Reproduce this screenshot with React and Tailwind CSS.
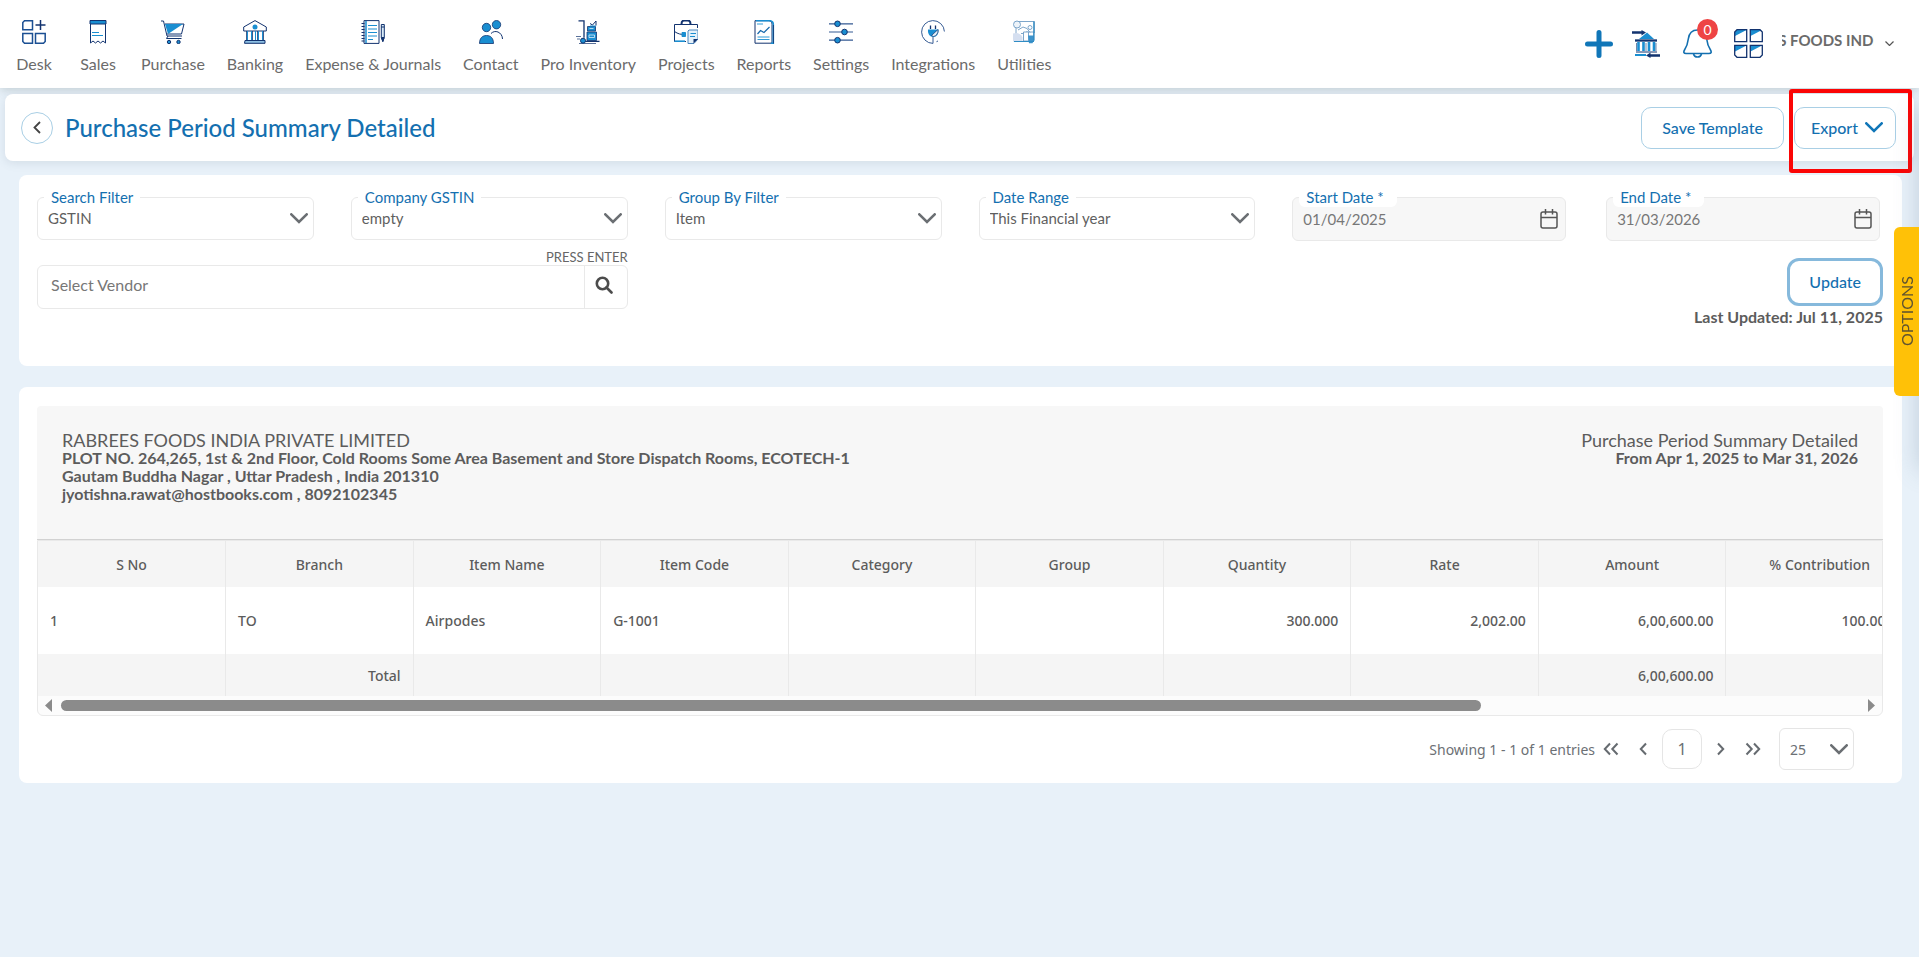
import React from "react";

const NAVY = "#12336f";
const BLUE = "#1a8ed1";

function Icon({ children, className = "size-6" }) {
  return (
    <svg viewBox="0 0 24 24" className={className} fill="none" stroke={NAVY} strokeWidth="1" aria-hidden="true">
      {children}
    </svg>
  );
}

const icons = {
  Desk: (
    <g stroke="#1b4f93" strokeWidth="1.5">
      <path d="M2.500.8h8v9H.8V2.500zM.8 13.500h9.700v9.700H2.500l-1.700-1.700zM13.500 13.500h9.700v8l-1.700 1.700h-8z" />
      <path d="M18.500 0v10M13.500 5h10" stroke={NAVY} />
    </g>
  ),
  Sales: (
    <g>
      <path d="M4.500.5h15v22.500l-2.500-2-2.500 2-2.500-2-2.500 2-2.500-2-2.500 2z" />
      <path d="M4 .5h16v3.500H4z" fill={BLUE} />
      <path d="M6 12.500h7M6 15.500h11" stroke={BLUE} />
    </g>
  ),
  Purchase: (
    <g>
      <path d="M0 1h2.500L6 16h15M4 4h19l-2.500 10H6M7 16l-1.500 2.500h15" />
      <path d="M4 4h18L7 14z" fill={BLUE} stroke="none" />
      <circle cx="8" cy="22" r="1.700" fill={BLUE} />
      <circle cx="17.500" cy="22" r="1.700" fill={BLUE} />
    </g>
  ),
  Banking: (
    <g>
      <path d="M12 .6 23.300 7v4H.7V7z" />
      <circle cx="12" cy="7" r="2.500" fill={BLUE} stroke="none" />
      <path d="M4.500 11v9M8.500 11v9M12.500 11v9M15.500 11v9M19.500 11v9" stroke={BLUE} />
      <path d="M3.500 11v9M9.500 11v9M14.500 11v9M20.500 11v9" strokeWidth=".8" />
      <path d="M2 20.500h20v2.800H1.500z" fill="#8dbfe3" />
    </g>
  ),
  "Expense & Journals": (
    <g>
      <path d="M3 .6h15v22.800H3z" />
      <path d="M.5 3.500h3M.5 6.500h3M.5 9.500h3M.5 12.500h3M.5 15.500h3M.5 18.500h3M.5 21h3" />
      <path d="M5 1v22" stroke={BLUE} strokeWidth="1.500" />
      <path d="M7 5.500h9M7 9h9M7 12.500h9M7 16h9M7 19.500h5" stroke={BLUE} strokeWidth="1.200" />
      <path d="M20.300 4.500h3v13l-1.500 4-1.500-4zM20.300 7h3" fill="#d9ebf7" />
      <path d="M20.500 17.500h2.600l-1.300 4z" fill={NAVY} />
    </g>
  ),
  Contact: (
    <g>
      <circle cx="7.500" cy="7.500" r="4.200" fill={BLUE} strokeWidth=".8" />
      <circle cx="17.500" cy="4.700" r="4.200" fill={BLUE} strokeWidth=".8" />
      <path d="M.5 23.500c0-5 2.500-8 7-8s7 3 7 8z" fill={BLUE} strokeWidth=".8" />
      <path d="M12 13.500c2-2 4.500-2.500 7-1.500s4.500 3.800 4.500 7" />
    </g>
  ),
  "Pro Inventory": (
    <g>
      <path d="M2.500.8h5.500v17M9 21.300h14.500" strokeWidth="1.300" />
      <path d="M0 16.500h5M1 19h3M3 23.500h17" strokeWidth=".7" />
      <path d="M11.500 6.500h8v4.500h-8zM11 12h9.500v8.500H11z" fill={BLUE} strokeWidth=".8" />
      <path d="M13.500 8.500h4M13 15h5.500v2.500H13z" stroke="#d9ebf7" strokeWidth=".8" />
      <path d="m14 3.500 2.500 1.500L20 1v4.500" strokeWidth="1" />
      <path d="M14 6h6" stroke={BLUE} />
      <circle cx="7" cy="20.700" r="2.500" fill={BLUE} />
    </g>
  ),
  Projects: (
    <g>
      <path d="M23.500 8V4.500H.5v17H12M.5 11.500C4 14 7 14.500 10 14.500" />
      <path d="M7.500 4c0-2.500 1-3.400 2.500-3.400h4c1.500 0 2.500.9 2.500 3.400" strokeWidth="2" />
      <path d="M8 12.500h3.500v4H8z" fill={BLUE} stroke={BLUE} />
      <path d="M.5 21.200H11" stroke={BLUE} strokeWidth="1.600" />
      <path d="M15 10h9v9l-4 4.500h-6V11z" fill="#e4f1fa" stroke="#4a86bd" />
      <path d="M16.500 13.500H22M16 16.500h5" stroke={BLUE} />
      <path d="M19.500 23.500V19H24z" fill={NAVY} stroke="none" />
    </g>
  ),
  Reports: (
    <g>
      <path d="M3 .7h13.500c2.500 0 3.500 1.500 3.500 3.500v19H3z" />
      <path d="M4 .8h14.500c1.500.5 2.800 2 2.800 3.500v19h-2.500" stroke={BLUE} strokeWidth="1.600" />
      <path d="M21.500 5v18.500" strokeWidth=".8" />
      <path d="m5.500 14 3-3.500 3.500 2 5.500-5.500" stroke="#1769ad" strokeWidth="1.200" />
      <path d="M5 4h6M5.500 17h12M5.500 19.500h12" stroke={BLUE} strokeWidth=".9" />
    </g>
  ),
  Settings: (
    <g>
      <path d="M0 3.800h24M0 12h24M0 20.200h24" stroke="#345a93" strokeWidth="1.200" />
      <circle cx="8.500" cy="3.800" r="2.800" fill={BLUE} />
      <circle cx="15.500" cy="12" r="2.800" fill={BLUE} />
      <circle cx="8.500" cy="20.200" r="2.800" fill={BLUE} />
    </g>
  ),
  Integrations: (
    <g>
      <path d="M17 21c-.500.300-1 .5-1.500.7M12 23.400A11.400 11.400 0 1 1 23.400 11.500M12 23.400V17" stroke="#345a93" />
      <path d="M9.500 9V5.500M14.500 9V5.500" strokeWidth="1.300" />
      <path d="M7 9.500h10.500c.5 4.500-2 7.500-5.300 7.500S6.500 14 7 9.500z" fill={BLUE} stroke="none" />
      <path d="m10.500 15.500 6.500-6c.4 4-1.800 6.500-4.500 7z" fill="#e4f1fa" strokeWidth=".7" />
    </g>
  ),
  Utilities: (
    <g stroke="#6f9cc4" strokeWidth=".9">
      <path d="M3 1.500h19.500V13M4 14V8M9 13.500h4M14 12h8v8" />
      <circle cx="5" cy="4.500" r="3.500" fill="#edf3f9" />
      <circle cx="18" cy="7.500" r="2" />
      <path d="m6 10 5-3 4 1.500 3 4" />
      <path d="M1 13.500c4-1.500 8 0 9.500 4v4H1z" fill="#d5dff0" stroke="none" />
      <path d="M11.500 12h5v9h-5z" fill="#fff" />
      <path d="M16 15.500h6V20l-1.500 3.300H17z" fill="#3e93cb" stroke="none" />
      <path d="M2 21.500h20M21.800 1.500V21" stroke="#2f8cc4" strokeWidth="1.200" />
    </g>
  ),
};

const nav = Object.keys(icons);

function Chevron({ className = "text-[#6b6f73]" }) {
  return (
    <svg viewBox="0 0 18 11" className={`h-[11px] w-[18px] ${className}`} fill="none" stroke="currentColor" strokeWidth="2.600" aria-hidden="true">
      <path d="m1.300 1.300 7.700 7.700 7.700-7.700" strokeLinecap="round" />
    </svg>
  );
}

function Pager({ label, double, right }) {
  return (
    <button type="button" aria-label={label} className="text-[#666b70]">
      <svg viewBox={double ? "0 0 16 14" : "0 0 8 14"} className={double ? "h-[14px] w-4" : "h-[14px] w-2"} fill="none" stroke="currentColor" strokeWidth="2">
        <g transform={right ? (double ? "matrix(-1 0 0 1 16 0)" : "matrix(-1 0 0 1 8 0)") : undefined}>
          <path d="M7 1.500 1.800 7 7 12.500" />
          {double && <path d="M14.500 1.500 9.300 7l5.200 5.500" />}
        </g>
      </svg>
    </button>
  );
}

function FieldLabel({ id, children }) {
  return (
    <label htmlFor={id} className="absolute -top-[10px] left-[7px] rounded-md bg-white px-[7px] text-[15px] leading-5 text-[#1470b0]">
      {children}
    </label>
  );
}

function SelectField({ id, label, value }) {
  return (
    <div className="relative">
      <FieldLabel id={id}>{label}</FieldLabel>
      <select id={id} className="h-[43px] w-full appearance-none rounded-md border border-[#e9e9e9] bg-white pl-[10px] text-[15px] text-[#5f5f5f]">
        <option>{value}</option>
      </select>
      <span className="pointer-events-none absolute right-[6px] top-4">
        <Chevron />
      </span>
    </div>
  );
}

function DateField({ id, label, value }) {
  return (
    <div className="relative mr-[3px]">
      <FieldLabel id={id}>
        {label} <span className="pr-[6px]">*</span>
      </FieldLabel>
      <input id={id} disabled defaultValue={value} className="h-11 w-full rounded-md border border-[#e9e9e9] bg-[#f7f7f7] pl-[10px] pr-10 text-[15px] text-[#777]" />
      <svg viewBox="0 0 18 20" className="absolute right-2 top-[12px] h-5 w-[18px]" fill="none" stroke="#555" strokeWidth="1.500" aria-hidden="true">
        <rect x="1" y="3" width="16" height="16" rx="2" />
        <path d="M1 8.500h16M5.500 0v5.500M12.500 0v5.500" />
      </svg>
    </div>
  );
}

const columns = ["S No", "Branch", "Item Name", "Item Code", "Category", "Group", "Quantity", "Rate", "Amount", "% Contribution"];
const row = ["1", "TO", "Airpodes", "G-1001", "", "", "300.000", "2,002.00", "6,00,600.00", "100.00 %"];
const totals = ["", "Total", "", "", "", "", "", "", "6,00,600.00", ""];

export default function App() {
  return (
    <div className="relative min-h-screen overflow-x-hidden bg-[#e8f1f9] font-['Lato',sans-serif] text-[#5c5c5c]">
      <header className="relative flex h-[88px] items-start bg-white pl-[13px] pr-[25px] shadow-[0_2px_8px_rgba(90,110,110,0.25)]">
        <nav className="flex gap-[22px] pt-5">
          {nav.map((name) => (
            <a key={name} href="#" className="flex min-w-[42px] flex-col items-center gap-[10px] whitespace-nowrap text-[16px] leading-5 text-[#6b6b6b]">
              <Icon>{icons[name]}</Icon>
              {name}
            </a>
          ))}
        </nav>
        <div className="ml-auto flex items-center pt-[29px]">
          <button type="button" aria-label="Add" className="mr-[19px]">
            <svg viewBox="0 0 28 28" className="size-7" stroke="#1076b8" strokeWidth="5" strokeLinecap="round">
              <path d="M14 2.500v23M2.500 14h23" />
            </svg>
          </button>
          <button type="button" aria-label="Bank transfer" className="mr-[23px]">
            <svg viewBox="0 0 28 28" className="size-7" fill="none" stroke={NAVY}>
              <path d="M0 2.500h10M18 25.500h10" strokeWidth="2.500" />
              <path d="M9.500 0 14 2.500 9.500 5.500zM18.500 22.500 14 25.500l4.500 2.500z" fill={NAVY} stroke="none" />
              <path d="M15 2.500 22 9H7z" fill={BLUE} stroke="none" />
              <path d="M3 10.500h22" strokeWidth="2.300" />
              <path d="M6.500 12v9M11.500 12v9M17 12v9M22 12v9" stroke={BLUE} strokeWidth="2.600" />
              <path d="M4.500 13v8M14 13v8M24 13v8" strokeWidth=".6" />
              <path d="M4 22h21" strokeWidth="1" />
              <path d="M3 25h11" stroke={BLUE} strokeWidth="2" />
            </svg>
          </button>
          <button type="button" aria-label="Notifications" className="relative mr-[22px]">
            <svg viewBox="0 0 29 29" className="size-[29px]" fill="none" stroke="#1470b0" strokeWidth="1.600">
              <path d="M14.500 1C9 1 6 4.500 5.300 10 4.800 14.500 3.800 17.500 1.500 21c-1.300 2.300-.7 3.500 1.500 3.500h23c2.200 0 2.800-1.200 1.500-3.500-2.300-3.500-3.300-6.500-3.800-11C23 4.500 20 1 14.500 1z" />
              <path d="M10.500 25c.5 2 2 3 4 3s3.500-1 4-3" />
            </svg>
            <span className="absolute -top-[10px] left-[14px] flex size-[21px] items-center justify-center rounded-full bg-[#ee4444] text-[14px] text-white">0</span>
          </button>
          <button type="button" aria-label="Apps" className="mr-[19px]">
            <svg viewBox="0 0 29 29" className="size-[29px]" fill="none" stroke={NAVY} strokeWidth="1.300">
              <path d="M1 7V3l2-2h9.500zM16.500 7V1H28zM1 22.500v-6h11.500zM16.500 22.500v-6H28z" fill={BLUE} stroke="none" />
              <path d="M3 .7h9.700v12H.7V3zM16.300.7H26L28.300 3v9.700h-12zM.7 16.300h12v12H3L.7 26zM16.300 16.300h12V26L26 28.300h-9.700z" />
            </svg>
          </button>
          <button type="button" className="flex items-center gap-[11px] pb-[7px]">
            <span className="flex w-[92px] justify-center overflow-hidden whitespace-nowrap text-[15px] font-bold leading-5 text-[#6b6b6b]">S FOODS INDI</span>
            <svg viewBox="0 0 9 5" className="mt-[6px] h-[5px] w-[9px]" fill="none" stroke="#555" strokeWidth="1.200">
              <path d="m.5.5 4 4 4-4" />
            </svg>
          </button>
        </div>
      </header>

      <div className="relative mx-[5px] mt-[6px] flex h-[67px] items-center rounded-lg bg-white pl-4 pr-[18px] shadow-[0_2px_10px_rgba(90,110,130,0.15)]">
        <button type="button" aria-label="Back" className="flex size-8 items-center justify-center rounded-full border border-[#a9cfe5]">
          <svg viewBox="0 0 8 13" className="h-[13px] w-2" fill="none" stroke="#444" strokeWidth="1.800">
            <path d="M7 1 1.500 6.500 7 12" />
          </svg>
        </button>
        <h1 className="ml-3 text-[24px] font-medium leading-8 text-[#1470b0]">Purchase Period Summary Detailed</h1>
        <div className="ml-auto flex items-center gap-[10px] text-[16px] font-medium text-[#1470b0]">
          <button type="button" className="h-[42px] rounded-[10px] border border-[#a9cfe5] px-5">Save Template</button>
          <div className="relative">
            <button type="button" className="flex h-[42px] items-center gap-[7px] rounded-[10px] border border-[#a9cfe5] pl-4 pr-3">
              Export
              <Chevron className="text-[#1076b8]" />
            </button>
            <div className="pointer-events-none absolute -left-[5px] -right-4 -top-[18px] h-[84px] rounded-[3px] border-4 border-[#fb0505]" />
          </div>
        </div>
      </div>

      <main className="ml-[19px] mr-[17px] mt-[14px]">
        <section className="grid grid-cols-6 gap-x-[37px] rounded-lg bg-white pb-10 pl-[18px] pr-[19px] pt-[22px]">
          <SelectField id="search-filter" label="Search Filter" value="GSTIN" />
          <SelectField id="company" label="Company GSTIN" value="empty" />
          <SelectField id="group-by" label="Group By Filter" value="Item" />
          <SelectField id="range" label="Date Range" value="This Financial year" />
          <DateField id="start" label="Start Date" value="01/04/2025" />
          <DateField id="end" label="End Date" value="31/03/2026" />
          <div className="col-span-2 mt-2">
            <label htmlFor="vendor" className="block text-right text-[13px] leading-4 text-[#666]">PRESS ENTER</label>
            <div className="flex h-11 items-center rounded-md border border-[#e9e9e9]">
              <input id="vendor" placeholder="Select Vendor" className="h-full min-w-0 flex-1 bg-transparent pb-[6px] pl-[13px] text-[16px] placeholder:text-[#777]" />
              <button type="button" aria-label="Search" className="flex h-full w-[43px] items-center justify-center border-l border-[#e9e9e9] pb-1 pr-1">
                <svg viewBox="0 0 18 18" className="size-[18px]" fill="none" stroke="#4c4c4c" strokeWidth="2.600">
                  <circle cx="7.500" cy="7.500" r="5.700" />
                  <path d="m11.500 11.500 5 5" strokeLinecap="round" />
                </svg>
              </button>
            </div>
          </div>
          <div className="col-span-2 col-start-5 mt-[17px] flex flex-col items-end">
            <button type="button" className="h-12 rounded-xl border-[3px] border-[#86b9dc] px-[19px] text-[16px] font-medium text-[#1470b0]">Update</button>
            <p className="mt-[2px] text-[16px] font-bold leading-[18px]">Last Updated: Jul 11, 2025</p>
          </div>
        </section>

        <section className="mt-[21px] rounded-lg bg-white pb-[13px] pl-[18px] pr-[19px] pt-[19px]">
          <div className="flex h-[134px] justify-between rounded-t border-b border-[#d2d2d2] bg-[#f7f7f7] px-[25px] pt-[25px] text-[16px] font-bold leading-[18px]">
            <div>
              <h2 className="text-[18px] font-normal">RABREES FOODS INDIA PRIVATE LIMITED</h2>
              <p>PLOT NO. 264,265, 1st &amp; 2nd Floor, Cold Rooms Some Area Basement and Store Dispatch Rooms, ECOTECH-1</p>
              <p>Gautam Buddha Nagar , Uttar Pradesh , India 201310</p>
              <p>jyotishna.rawat@hostbooks.com , 8092102345</p>
            </div>
            <div className="text-right">
              <h2 className="text-[18px] font-normal">Purchase Period Summary Detailed</h2>
              <p>From Apr 1, 2025 to Mar 31, 2026</p>
            </div>
          </div>

          <div className="rounded-b-md border border-[#e9e9e9] bg-[#fcfcfc] font-['Noto_Sans',sans-serif] text-[14px] font-medium">
            <div className="overflow-hidden">
              <table className="w-[1876px] table-fixed border-collapse">
                <thead>
                  <tr className="h-[46px] bg-[#f5f5f5]">
                    {columns.map((c) => (
                      <th key={c} scope="col" className="border-r border-[#e9e9e9] text-center font-medium">{c}</th>
                    ))}
                  </tr>
                </thead>
                <tbody>
                  <tr className="h-[67px] bg-white">
                    {row.map((c, i) => (
                      <td key={i} className={i > 5 ? "border-r border-[#e9e9e9] px-3 text-right" : "border-r border-[#e9e9e9] px-3"}>{c}</td>
                    ))}
                  </tr>
                </tbody>
                <tfoot>
                  <tr className="h-[42px] bg-[#f5f5f5]">
                    {totals.map((c, i) => (
                      <td key={i} className="border-r border-[#e9e9e9] px-3 text-right">{c}</td>
                    ))}
                  </tr>
                </tfoot>
              </table>
            </div>
            <div className="flex h-[19px] items-center px-[7px]">
              <svg viewBox="0 0 7 13" className="h-[13px] w-[7px]" fill="#8b8b8b"><path d="M7 0v13L0 6.500z" /></svg>
              <div className="mx-[9px] flex-1">
                <div className="h-[11px] w-[79%] rounded-full bg-[#8b8b8b]" />
              </div>
              <svg viewBox="0 0 7 13" className="h-[13px] w-[7px]" fill="#8b8b8b"><path d="M0 0v13l7-6.500z" /></svg>
            </div>
          </div>

          <div className="mt-3 flex h-[42px] items-center justify-end pr-[29px] font-['Noto_Sans',sans-serif] text-[14px] text-[#6c7075]">
            <span className="mr-2">Showing 1 - 1 of 1 entries</span>
            <Pager label="First page" double />
            <span className="w-5" />
            <Pager label="Previous page" />
            <button type="button" className="mx-[15px] h-10 w-10 rounded-[10px] border border-[#e5e5e5] text-[16px]">1</button>
            <Pager label="Next page" right />
            <span className="w-5" />
            <Pager label="Last page" double right />
            <div className="relative ml-[18px]">
              <select aria-label="Rows per page" className="h-[42px] w-[75px] appearance-none rounded-md border border-[#e5e5e5] bg-white pl-[10px] text-[14px]">
                <option>25</option>
              </select>
              <span className="pointer-events-none absolute right-[6px] top-4"><Chevron /></span>
            </div>
          </div>
        </section>
      </main>

      <div className="pointer-events-none fixed left-full top-[110px] h-[360px] w-10 shadow-[0_0_24px_rgba(90,120,150,0.3)]" />
      <button type="button" className="fixed right-0 top-[227px] flex h-[169px] w-[25px] items-center justify-center rounded-l-md bg-[#ffc107] text-[16px] text-[#5f5330]">
        <span className="rotate-180 [writing-mode:vertical-rl]">OPTIONS</span>
      </button>
    </div>
  );
}
